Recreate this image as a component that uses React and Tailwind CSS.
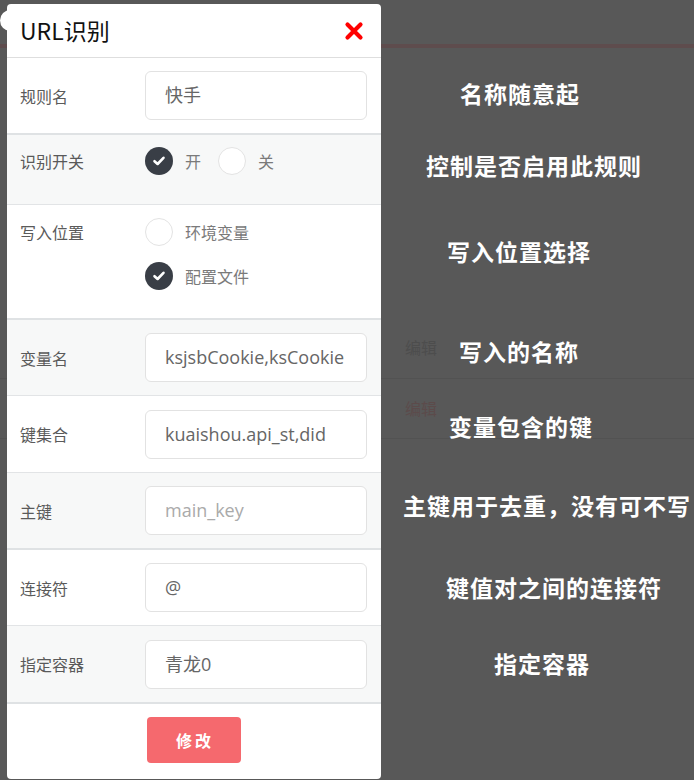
import React from "react";

const FONT = { fontFamily: '"Open Sans", "Noto Sans CJK SC", sans-serif' };
const CJK = { fontFamily: '"Noto Sans CJK SC", "Noto Sans", sans-serif' };

function Radio({ checked, label }) {
  return (
    <div className="flex items-center h-[28px]">
      {checked ? (
        <div className="w-[28px] h-[28px] rounded-full bg-[#393e46] flex items-center justify-center shrink-0">
          <svg width="14" height="14" viewBox="0 0 14 14">
            <path d="M2.5 7.2 L5.6 10 L11.5 3.8" fill="none" stroke="#fff" strokeWidth="2.6" strokeLinecap="round" strokeLinejoin="round" />
          </svg>
        </div>
      ) : (
        <div className="w-[28px] h-[28px] rounded-full bg-white border border-[#e3e3e3] shrink-0" />
      )}
      <span className="ml-[12px] text-[16px] text-[#7a7a7a]" style={CJK}>{label}</span>
    </div>
  );
}

function InputRow({ label, value, placeholder, bg, border, h }) {
  return (
    <div className={`flex items-center pl-[13px] pr-[14px] ${bg} ${border}`} style={{ height: h }}>
      <div className="w-[125px] text-[16px] text-[#5a5a5a]" style={CJK}>{label}</div>
      <div className="flex-1 h-[49px] rounded-[6px] border border-[#e2e2e2] bg-white flex items-center pl-[19px]">
        {value ? (
          <span className="text-[18px] text-[#666]" style={FONT}>{value}</span>
        ) : (
          <span className="text-[18px] text-[#aaa]" style={FONT}>{placeholder}</span>
        )}
      </div>
    </div>
  );
}

function Note({ children, ml, mt }) {
  return (
    <div className="text-white font-bold text-[23px] leading-[30px] tracking-[1px] whitespace-nowrap" style={{ ...CJK, marginLeft: ml, marginTop: mt }}>
      {children}
    </div>
  );
}

export default function App() {
  return (
    <div className="relative w-[694px] h-[780px] bg-[#585858] overflow-hidden">
      {/* dimmed page behind */}
      <div className="flex flex-col">
        <div className="h-[44px]" />
        <div className="h-[4px] bg-[#5e4c4d]" />
        <div className="h-[281px]" />
        <div className="flex flex-col pl-[405px]">
          <div className="h-[36px] flex items-center text-[16px] text-[#4d4d4d]" style={CJK}>编辑</div>
          <div className="h-[13px]" />
          <div className="h-[1px] bg-[#525252] -ml-[405px]" />
          <div className="h-[19px]" />
          <div className="h-[20px] flex items-center text-[16px] text-[#5c4b4b]" style={CJK}>编辑</div>
          <div className="h-[20px]" />
          <div className="h-[1px] bg-[#525252] -ml-[405px]" />
        </div>
      </div>

      {/* overlay */}
      <div className="absolute inset-0 flex">
        <div className="relative ml-[7px] mt-[4px] w-[374px] h-[775px] bg-white rounded-[4px] flex flex-col overflow-visible">
          <div className="absolute -left-[7px] top-[6px] w-[16px] h-[21px] bg-white rounded-l-full" />
          {/* header */}
          <div className="relative h-[54px] border-b border-[#dedede] flex items-center justify-between pl-[13px] pr-[17px]">
            <span className="text-[23px] text-[#111]" style={CJK}>URL识别</span>
            <svg width="20" height="20" viewBox="0 0 20 20">
              <path d="M3.5 3.5 L16.5 16.5 M16.5 3.5 L3.5 16.5" stroke="#ff0000" strokeWidth="4.2" strokeLinecap="round" />
            </svg>
          </div>
          <InputRow label="规则名" value="快手" bg="bg-white" border="border-b-2 border-[#dfe2e4]" h={77} />
          {/* switch row */}
          <div className="flex items-start pl-[13px] pr-[14px] pt-[12px] bg-[#f7f8f8] border-b border-[#e2e4e6] h-[70px]">
            <div className="w-[125px] h-[28px] flex items-center text-[16px] text-[#5a5a5a]" style={CJK}>识别开关</div>
            <div className="flex items-center gap-[17px]">
              <Radio checked label="开" />
              <Radio label="关" />
            </div>
          </div>
          {/* location row */}
          <div className="flex items-start pl-[13px] pr-[14px] pt-[13px] bg-white border-b-2 border-[#dfe2e4] h-[115px]">
            <div className="w-[125px] h-[28px] flex items-center text-[16px] text-[#5a5a5a]" style={CJK}>写入位置</div>
            <div className="flex flex-col gap-[16px]">
              <Radio label="环境变量" />
              <Radio checked label="配置文件" />
            </div>
          </div>
          <InputRow label="变量名" value="ksjsbCookie,ksCookie" bg="bg-[#f7f8f8]" border="border-b border-[#e2e4e6]" h={76} />
          <InputRow label="键集合" value="kuaishou.api_st,did" bg="bg-white" border="border-b border-[#e2e4e6]" h={77} />
          <InputRow label="主键" placeholder="main_key" bg="bg-[#f7f8f8]" border="border-b-2 border-[#dfe2e4]" h={77} />
          <InputRow label="连接符" value="@" bg="bg-white" border="border-b border-[#e2e4e6]" h={76} />
          <InputRow label="指定容器" value="青龙0" bg="bg-[#f7f8f8]" border="border-b-2 border-[#dfe2e4]" h={78} />
          {/* footer */}
          <div className="flex-1 flex justify-center pt-[13px] pr-[1px]">
            <div className="w-[94px] h-[46px] rounded-[4px] bg-[#f5696e] flex items-center justify-center text-white font-bold text-[16px] tracking-[3px] pl-[3px]" style={CJK}>修改</div>
          </div>
        </div>

        {/* annotations */}
        <div className="flex flex-col">
          <Note ml={79} mt={78}>名称随意起</Note>
          <Note ml={45} mt={42}>控制是否启用此规则</Note>
          <Note ml={66} mt={56}>写入位置选择</Note>
          <Note ml={78} mt={70}>写入的名称</Note>
          <Note ml={68} mt={45}>变量包含的键</Note>
          <Note ml={22} mt={49}>主键用于去重，没有可不写</Note>
          <Note ml={65} mt={52}>键值对之间的连接符</Note>
          <Note ml={113} mt={46}>指定容器</Note>
        </div>
      </div>
    </div>
  );
}
